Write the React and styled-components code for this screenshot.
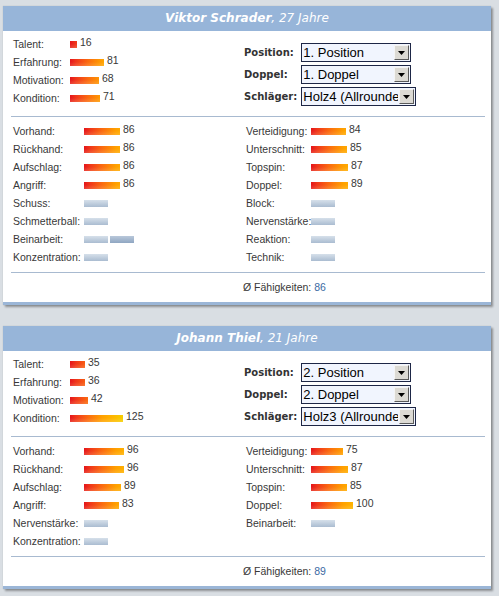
import React from 'react';
import styled, { createGlobalStyle } from 'styled-components';

const GlobalStyle = createGlobalStyle`
  html, body { margin: 0; padding: 0; background: #d9dee3; }
  body { font-family: "Liberation Sans", Arial, sans-serif; }
`;

const Page = styled.div`
  display: flex;
  flex-direction: column;
  gap: 21px;
  width: 488px;
  padding: 6px 0 12px 3px;
`;

const Panel = styled.section`
  background: #fff;
  border-bottom: 3px solid #9bb6d7;
  box-shadow: 2px 2px 2px rgba(0, 0, 0, 0.35), 0 0 1px rgba(0, 0, 0, 0.2);
`;

const Header = styled.h2`
  margin: 0;
  height: 25px;
  background: #97b5d9;
  color: #fff;
  font: italic normal 12px/25px "DejaVu Sans", Verdana, sans-serif;
  text-align: center;
  b { font-weight: bold; }
`;

const Body = styled.div`
  padding: 0 6px 0 8px;
`;

const Divider = styled.hr`
  margin: 0;
  border: 0;
  height: 1px;
  background: #a8bad0;
`;

const Section = styled.div`
  display: grid;
  grid-template-columns: 233px 1fr;
  padding: ${p => p.$pad};
  padding-left: 2px;
`;

const Column = styled.div`
  display: flex;
  flex-direction: column;
`;

const Row = styled.div`
  display: grid;
  grid-template-columns: ${p => p.$labelWidth}px auto;
  align-items: center;
  height: 18px;
  font-size: 10.5px;
  color: #383838;
`;

const Label = styled.span`
  line-height: 18px;
  white-space: nowrap;
`;

const BarCell = styled.div`
  display: flex;
  align-items: center;
  gap: 2px;
`;

const FillBar = styled.span`
  display: block;
  height: 7px;
  background-image:
    linear-gradient(to bottom, rgba(255,255,255,0) 40%, rgba(255,255,200,0.18)),
    linear-gradient(to right, #e4151b 0px, #f0361a 6px, #fb6a10 18px, #ffa000 32px, #ffb400 42px, #f2d400 56px);
  background-size: 100% 100%, 56px 100%;
  background-repeat: no-repeat;
`;

const GrayBar = styled.span`
  display: block;
  width: 24px;
  height: 7px;
  background: ${p => p.$dark
    ? 'linear-gradient(to bottom, #b9c8da, #8fa6c2)'
    : 'linear-gradient(to bottom, #d6e0ea, #aabcd1)'};
`;

const Value = styled.span`
  margin-left: 1px;
  margin-bottom: 4px;
  font-size: 10.5px;
  color: #383838;
`;

const Controls = styled.div`
  display: grid;
  grid-template-columns: auto auto;
  column-gap: 4px;
  row-gap: 3px;
  align-items: center;
  justify-content: start;
  align-content: start;
  padding-top: 8px;
  margin-left: -2px;
`;

const ControlLabel = styled.label`
  font: bold 10px "DejaVu Sans", Verdana, sans-serif;
  color: #333;
  white-space: nowrap;
`;

const SelectBox = styled.div`
  display: flex;
  align-items: center;
  box-sizing: border-box;
  width: ${p => p.$w}px;
  height: 19px;
  border: 1px solid #1d2646;
  background: #f1f5fe;
  overflow: hidden;
`;

const NativeSelect = styled.select`
  appearance: none;
  -webkit-appearance: none;
  flex: 1;
  min-width: 0;
  height: 100%;
  border: 0;
  margin: 0;
  padding: 0 0 0 1px;
  background: transparent;
  font: 13px "Liberation Sans", Arial, sans-serif;
  color: #000;
  outline: none;
  overflow: hidden;
  white-space: nowrap;
`;

const ArrowButton = styled.span`
  display: flex;
  align-items: center;
  justify-content: center;
  box-sizing: border-box;
  flex: none;
  width: 15px;
  height: 15px;
  margin: 0 1px;
  background: #dcdad4;
  border: 1px solid;
  border-color: #f4f4f4 #5a5a5a #5a5a5a #f4f4f4;
`;

const Footer = styled.div`
  padding: 5px 0 6px 232px;
  font-size: 10.5px;
  line-height: 18px;
  color: #383838;
  span { color: #3b6aa3; }
`;

const Arrow = () => (
  <svg width="7" height="4" viewBox="0 0 7 4"><path d="M0 0h7L3.5 4z" fill="#000" /></svg>
);

const StatRow = ({ label, value, gray, labelWidth }) => (
  <Row $labelWidth={labelWidth}>
    <Label>{label}</Label>
    <BarCell>
      {gray
        ? Array.from({ length: gray }).map((_, i) => <GrayBar key={i} $dark={i > 0} />)
        : <>
            <FillBar style={{ width: `${Math.round(value * 0.42)}px` }} />
            <Value>{value}</Value>
          </>}
    </BarCell>
  </Row>
);

const Select = ({ label, value, width }) => (
  <>
    <ControlLabel>{label}</ControlLabel>
    <SelectBox $w={width}>
      <NativeSelect defaultValue={value}>
        <option>{value}</option>
      </NativeSelect>
      <ArrowButton><Arrow /></ArrowButton>
    </SelectBox>
  </>
);

const players = [
  {
    name: 'Viktor Schrader', age: 27,
    base: [['Talent:', 16], ['Erfahrung:', 81], ['Motivation:', 68], ['Kondition:', 71]],
    position: '1. Position', doppel: '1. Doppel', schlaeger: 'Holz4 (Allrounder)',
    left: [['Vorhand:', 86], ['Rückhand:', 86], ['Aufschlag:', 86], ['Angriff:', 86],
      ['Schuss:', 0, 1], ['Schmetterball:', 0, 1], ['Beinarbeit:', 0, 2], ['Konzentration:', 0, 1]],
    right: [['Verteidigung:', 84], ['Unterschnitt:', 85], ['Topspin:', 87], ['Doppel:', 89],
      ['Block:', 0, 1], ['Nervenstärke:', 0, 1], ['Reaktion:', 0, 1], ['Technik:', 0, 1]],
    avg: 86,
  },
  {
    name: 'Johann Thiel', age: 21,
    base: [['Talent:', 35], ['Erfahrung:', 36], ['Motivation:', 42], ['Kondition:', 125]],
    position: '2. Position', doppel: '2. Doppel', schlaeger: 'Holz3 (Allrounder)',
    left: [['Vorhand:', 96], ['Rückhand:', 96], ['Aufschlag:', 89], ['Angriff:', 83],
      ['Nervenstärke:', 0, 1], ['Konzentration:', 0, 1]],
    right: [['Verteidigung:', 75], ['Unterschnitt:', 87], ['Topspin:', 85], ['Doppel:', 100],
      ['Beinarbeit:', 0, 1]],
    avg: 89,
  },
];

const PlayerPanel = ({ p }) => (
  <Panel>
    <Header><b>{p.name}</b>, {p.age} Jahre</Header>
    <Body>
      <Section $pad="4px 0 9px">
        <Column>
          {p.base.map(([l, v]) => <StatRow key={l} label={l} value={v} labelWidth={57} />)}
        </Column>
        <Controls>
          <Select label="Position:" value={p.position} width={110} />
          <Select label="Doppel:" value={p.doppel} width={110} />
          <Select label="Schläger:" value={p.schlaeger} width={115} />
        </Controls>
      </Section>
      <Divider />
      <Section $pad="5px 0 6px">
        <Column>
          {p.left.map(([l, v, g]) => <StatRow key={l} label={l} value={v} gray={g} labelWidth={71} />)}
        </Column>
        <Column>
          {p.right.map(([l, v, g]) => <StatRow key={l} label={l} value={v} gray={g} labelWidth={65} />)}
        </Column>
      </Section>
      <Divider />
      <Footer>Ø Fähigkeiten: <span>{p.avg}</span></Footer>
    </Body>
  </Panel>
);

export default function App() {
  return (
    <>
      <GlobalStyle />
      <Page>
        {players.map(p => <PlayerPanel key={p.name} p={p} />)}
      </Page>
    </>
  );
}
